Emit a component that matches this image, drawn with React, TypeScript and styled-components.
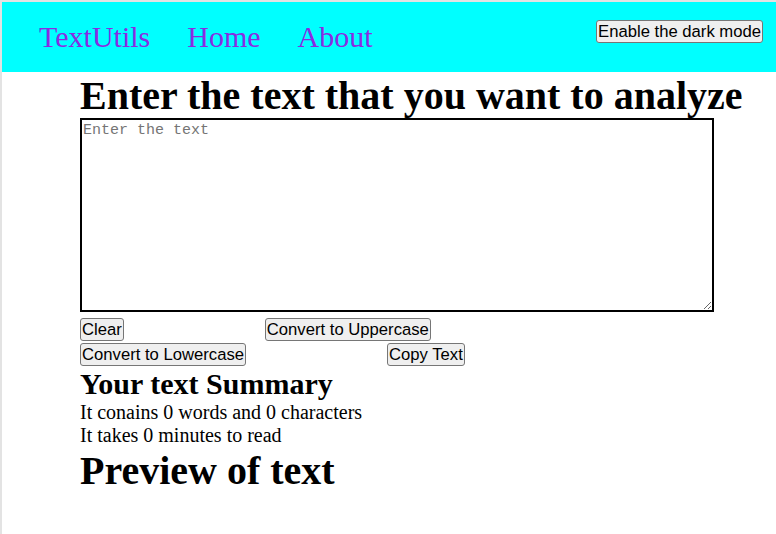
import React, { useState } from "react";
import styled, { createGlobalStyle } from "styled-components";

const GlobalStyle = createGlobalStyle`
  html, body {
    margin: 0;
    padding: 0;
    background: #ffffff;
  }
  body {
    font-family: "Liberation Serif", "Times New Roman", serif;
    font-size: 20px;
    color: #000;
  }
`;

const Page = styled.div`
  min-height: 532px;
  border-top: 2px solid #e3e3e3;
  border-left: 2px solid #e3e3e3;
  background: #fff;
`;

const NavBar = styled.nav`
  display: flex;
  align-items: flex-start;
  background: #00ffff;
  padding: 18px 13px 18px 37px;
`;

const NavLinks = styled.div`
  display: flex;
  align-items: flex-start;
  gap: 37px;
  flex: 1;
`;

const NavLink = styled.a`
  font-family: "Liberation Serif", "Times New Roman", serif;
  font-size: 30px;
  color: #8a2be2;
  text-decoration: none;
  line-height: normal;
  cursor: pointer;
`;

const Button = styled.button`
  font-family: "Liberation Sans", Arial, sans-serif;
  font-size: 16.67px;
  line-height: 19px;
  color: #000;
  background: #efefef;
  border: 1px solid #767676;
  border-radius: 3px;
  padding: 1px 1px;
  margin: 0;
  cursor: pointer;
`;

const Main = styled.main`
  padding-left: 78px;
`;

const Title = styled.h1`
  margin: 0;
  font-size: 40px;
  font-weight: bold;
  line-height: normal;
  white-space: nowrap;
`;

const HeadTitle = styled(Title)`
  margin-bottom: -1px;
`;

const SubTitle = styled.h2`
  margin: 1px 0 0 0;
  font-size: 30px;
  font-weight: bold;
  line-height: normal;
`;

const TextBox = styled.textarea`
  display: block;
  box-sizing: border-box;
  width: 634px;
  height: 194px;
  border: 2px solid #000;
  padding: 2px 1px;
  margin: 0;
  font-family: "Liberation Mono", "Courier New", monospace;
  font-size: 15px;
  resize: both;
  outline: none;
  &::placeholder {
    color: #757575;
  }
`;

const ButtonRow = styled.div`
  display: flex;
  flex-wrap: wrap;
  align-items: flex-start;
  column-gap: 141px;
  row-gap: 2px;
  width: 634px;
  margin-top: 6px;
`;

const Line = styled.p`
  margin: 0;
  font-size: 20px;
  line-height: 23px;
`;

export default function App() {
  const [text, setText] = useState("");
  const words = text.split(/\s+/).filter((w) => w.length > 0).length;
  return (
    <>
      <GlobalStyle />
      <Page>
        <NavBar>
          <NavLinks>
            <NavLink>TextUtils</NavLink>
            <NavLink>Home</NavLink>
            <NavLink>About</NavLink>
          </NavLinks>
          <Button>Enable the dark mode</Button>
        </NavBar>
        <Main>
          <HeadTitle>Enter the text that you want to analyze</HeadTitle>
          <TextBox
            placeholder="Enter the text"
            value={text}
            onChange={(e) => setText(e.target.value)}
          />
          <ButtonRow>
            <Button onClick={() => setText("")}>Clear</Button>
            <Button onClick={() => setText(text.toUpperCase())}>Convert to Uppercase</Button>
            <Button onClick={() => setText(text.toLowerCase())}>Convert to Lowercase</Button>
            <Button>Copy Text</Button>
          </ButtonRow>
          <SubTitle>Your text Summary</SubTitle>
          <Line>
            It conains {words} words and {text.length} characters
          </Line>
          <Line>It takes {Math.round(0.008 * words)} minutes to read</Line>
          <Title>Preview of text</Title>
        </Main>
      </Page>
    </>
  );
}
